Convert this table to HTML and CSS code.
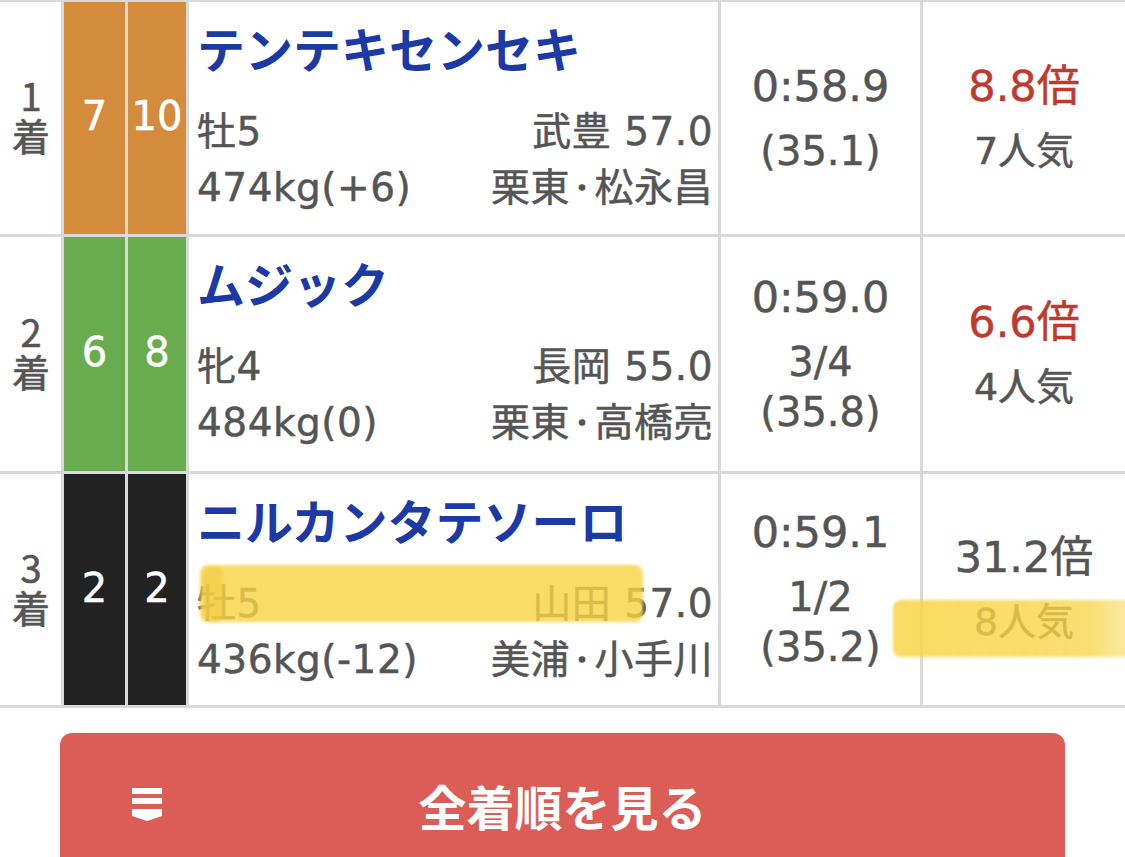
FILE: index.html
```html
<!DOCTYPE html>
<html lang="ja">
<head>
<meta charset="utf-8">
<title>着順</title>
<link rel="stylesheet" href="styles.css">
</head>
<body>
<div class="result">
  <div class="row row-1">
    <div class="rank"><span class="rank-text">1着</span></div>
    <div class="waku waku-orange">7</div>
    <div class="waku waku-orange">10</div>
    <div class="horse">
      <div class="name">テンテキセンセキ</div>
      <div class="meta">
        <div class="line"><span>牡5</span><span>武豊 57.0</span></div>
        <div class="line"><span>474kg(+6)</span><span>栗東<span class="dot">・</span>松永昌</span></div>
      </div>
    </div>
    <div class="time">
      <div class="main">0:58.9</div>
      <div class="sub">(35.1)</div>
    </div>
    <div class="odds">
      <div class="main red">8.8倍</div>
      <div class="sub pop">7人気</div>
    </div>
  </div>
  <div class="row row-2">
    <div class="rank"><span class="rank-text">2着</span></div>
    <div class="waku waku-green">6</div>
    <div class="waku waku-green">8</div>
    <div class="horse">
      <div class="name">ムジック</div>
      <div class="meta">
        <div class="line"><span>牝4</span><span>長岡 55.0</span></div>
        <div class="line"><span>484kg(0)</span><span>栗東<span class="dot">・</span>高橋亮</span></div>
      </div>
    </div>
    <div class="time">
      <div class="main">0:59.0</div>
      <div class="sub">3/4</div>
      <div class="sub">(35.8)</div>
    </div>
    <div class="odds">
      <div class="main red">6.6倍</div>
      <div class="sub pop">4人気</div>
    </div>
  </div>
  <div class="row row-3">
    <div class="rank"><span class="rank-text">3着</span></div>
    <div class="waku waku-black">2</div>
    <div class="waku waku-black">2</div>
    <div class="horse">
      <div class="name">ニルカンタテソーロ</div>
      <div class="meta">
        <div class="line"><span>牡5</span><span>山田 57.0</span></div>
        <div class="line"><span>436kg(-12)</span><span>美浦<span class="dot">・</span>小手川</span></div>
      </div>
    </div>
    <div class="time">
      <div class="main">0:59.1</div>
      <div class="sub">1/2</div>
      <div class="sub">(35.2)</div>
    </div>
    <div class="odds">
      <div class="main">31.2倍</div>
      <div class="sub pop">8人気</div>
    </div>
  </div>
  <div class="marker marker-a"></div>
  <div class="marker marker-a2"></div>
  <div class="marker marker-b"></div>
</div>
<div class="more-wrap">
  <div class="more-btn">
    <svg class="more-icon" width="30" height="33" viewBox="0 0 30 33" aria-hidden="true">
      <rect x="0" y="0" width="30" height="6" fill="#fff"/>
      <rect x="0" y="10" width="30" height="6" fill="#fff"/>
      <path d="M0 21 H30 V28 L15 33 L0 28 Z" fill="#fff"/>
    </svg>
    <span class="more-label">全着順を見る</span>
    <span></span>
  </div>
</div>
</body>
</html>
```

FILE: styles.css
```css
html, body {
  margin: 0;
  padding: 0;
  background: #fff;
  overflow: hidden;
}
body {
  width: 1125px;
  height: 857px;
  font-family: "DejaVu Sans", "Noto Sans CJK JP", sans-serif;
  color: #555;
}
.result {
  position: relative;
  display: flex;
  flex-direction: column;
  gap: 3px;
  padding: 2px 0 3px 0;
  background: #d9d9d9;
}
.row {
  display: grid;
  grid-template-columns: 61px 61px 58px 529px 199px 1fr;
  column-gap: 3px;
}
.row-1 { height: 232px; }
.row-2 { height: 234px; }
.row-3 { height: 231px; }

.rank {
  background: #fff;
  display: flex;
  align-items: center;
  justify-content: center;
  color: #555;
}
.rank-text {
  writing-mode: vertical-rl;
  text-orientation: upright;
  font-family: "Noto Sans CJK JP", sans-serif;
  font-size: 38px;
  line-height: 40px;
  letter-spacing: 2px;
  -webkit-text-stroke: 0.6px #555;
}
.waku {
  display: flex;
  align-items: center;
  justify-content: center;
  color: #fff;
  font-size: 40px;
  padding-bottom: 4px;
  box-sizing: border-box;
  -webkit-text-stroke: 0.5px #fff;
}
.waku-orange { background: #d48b3b; }
.waku-green { background: #69ab4f; }
.waku-black { background: #222; }

.horse {
  background: #fff;
  padding: 17px 5px 0 8px;
  box-sizing: border-box;
}
.name {
  font-family: "Noto Sans CJK JP", sans-serif;
  font-weight: 700;
  font-size: 48px;
  line-height: 56px;
  color: #1c3aa5;
  white-space: nowrap;
}
.meta {
  margin-top: 29px;
  display: flex;
  flex-direction: column;
}
.line {
  display: flex;
  justify-content: space-between;
  font-size: 39px;
  letter-spacing: 0.5px;
  line-height: 56px;
  white-space: nowrap;
  -webkit-text-stroke: 0.5px #555;
}
.dot {
  font-size: 24px;
  vertical-align: 5px;
  -webkit-text-stroke: 1.5px #555;
}

.time, .odds {
  background: #fff;
  display: flex;
  flex-direction: column;
  align-items: center;
  justify-content: center;
  white-space: nowrap;
  -webkit-text-stroke: 0.5px #555;
}
.main {
  font-size: 43px;
  line-height: 50px;
  margin-bottom: 15px;
}
.sub {
  font-size: 40px;
  line-height: 50px;
}
.sub.pop {
  font-size: 38px;
}
.red {
  color: #c0392f;
  -webkit-text-stroke: 0.5px #c0392f;
}

.marker {
  position: absolute;
  background: rgba(248, 212, 70, 0.82);
  border-radius: 8px;
  filter: blur(1.5px);
}
.marker-a {
  left: 200px;
  top: 565px;
  width: 443px;
  height: 57px;
}
.marker-a2 {
  left: 203px;
  top: 567px;
  width: 20px;
  height: 55px;
  background: rgba(240, 200, 60, 0.55);
}
.marker-b {
  left: 893px;
  top: 600px;
  width: 240px;
  height: 57px;
  background: linear-gradient(90deg, rgba(248, 212, 70, 0.85), rgba(248, 212, 70, 0.78) 80%, rgba(248, 214, 80, 0.5));
}

.more-wrap {
  padding: 25px 60px 0 60px;
}
.more-btn {
  height: 144px;
  background: #dc5d56;
  border-radius: 12px 12px 0 0;
  display: grid;
  grid-template-columns: 1fr auto 1fr;
  align-items: center;
  padding: 0 0 0 72px;
  box-sizing: border-box;
}
.more-icon {
  display: block;
  margin-top: -2px;
}
.more-label {
  font-family: "Noto Sans CJK JP", sans-serif;
  font-weight: 700;
  font-size: 48px;
  line-height: 56px;
  color: #fff;
  margin-left: -72px;
}
```
